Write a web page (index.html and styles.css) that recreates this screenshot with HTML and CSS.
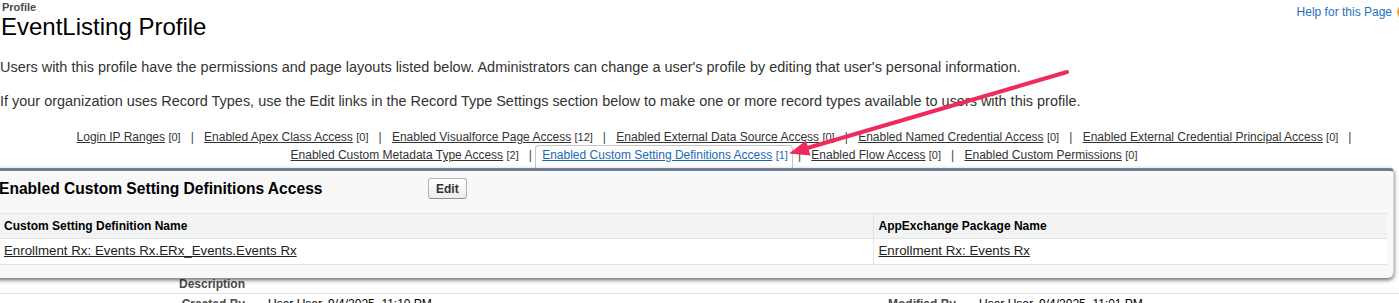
FILE: index.html
```html
<!DOCTYPE html>
<html lang="en">

<head>
  <meta charset="UTF-8">
  <meta name="viewport" content="width=device-width, initial-scale=1.0">
  <title>EventListing Profile</title>
  <link rel="stylesheet" href="styles.css">
</head>

<body>
<div class="page">
  <div class="header">
    <div class="titles">
      <div class="crumb">Profile</div>
      <h1>EventListing Profile</h1>
    </div>
    <div class="help">
      <a href="#">Help for this Page</a>
      <span class="help-icon"></span>
    </div>
  </div>

  <p class="intro">Users with this profile have the permissions and page layouts listed below. Administrators can change a user's profile by editing that user's personal information.</p>
  <p class="intro second">If your organization uses Record Types, use the Edit links in the Record Type Settings section below to make one or more record types available to users with this profile.</p>

  <div class="lists">
    <div class="list-row">
      <a href="#">Login IP Ranges</a> <span class="count">[0]</span><span class="sep">|</span>
      <a href="#">Enabled Apex Class Access</a> <span class="count">[0]</span><span class="sep">|</span>
      <a href="#">Enabled Visualforce Page Access</a> <span class="count">[12]</span><span class="sep">|</span>
      <a href="#">Enabled External Data Source Access</a> <span class="count">[0]</span><span class="sep">|</span>
      <a href="#">Enabled Named Credential Access</a> <span class="count">[0]</span><span class="sep">|</span>
      <a href="#">Enabled External Credential Principal Access</a> <span class="count">[0]</span><span class="sep last">|</span>
    </div>
    <div class="list-row">
      <a href="#">Enabled Custom Metadata Type Access</a> <span class="count">[2]</span><span class="sep">|</span>
      <span class="tab"><a href="#">Enabled Custom Setting Definitions Access</a> <span class="count">[1]</span></span><span class="sep">|</span>
      <a href="#">Enabled Flow Access</a> <span class="count">[0]</span><span class="sep">|</span>
      <a href="#">Enabled Custom Permissions</a> <span class="count">[0]</span>
    </div>

    <div class="hover-panel">
      <div class="panel-header">
        <h3>Enabled Custom Setting Definitions Access</h3>
        <button class="btn">Edit</button>
      </div>
      <table class="list">
        <colgroup>
          <col class="first-col">
          <col>
        </colgroup>
        <tr class="head">
          <th>Custom Setting Definition Name</th>
          <th>AppExchange Package Name</th>
        </tr>
        <tr>
          <td><a href="#">Enrollment Rx: Events Rx.ERx_Events.Events Rx</a></td>
          <td><a href="#">Enrollment Rx: Events Rx</a></td>
        </tr>
      </table>
    </div>
  </div>

  <div class="detail">
    <div class="detail-row">
      <span class="label">Description</span>
      <span class="value"></span>
      <span class="label"></span>
      <span class="value"></span>
    </div>
    <div class="detail-row">
      <span class="label">Created By</span>
      <span class="value">User User, 9/4/2025, 11:10 PM</span>
      <span class="label">Modified By</span>
      <span class="value">User User, 9/4/2025, 11:01 PM</span>
    </div>
  </div>
</div>

<svg class="arrow" width="1399" height="303" viewBox="0 0 1399 303">
  <line x1="1067" y1="72" x2="804" y2="149" stroke="#ef2a5c" stroke-width="4" stroke-linecap="round"/>
  <polygon points="789,153.5 806,140.5 810.5,155.5" fill="#ef2a5c"/>
</svg>
</body>
</html>
```

FILE: styles.css
```css
html {
  overflow: hidden;
}
html,
body {
  margin: 0;
  background-color: #fff;
  font-family: 'Liberation Sans', Arial, sans-serif;
  color: #333;
}
.page {
  position: relative;
}
.header {
  display: flex;
  justify-content: space-between;
}
.titles {
  padding-left: 1px;
}
.crumb {
  padding-top: 1px;
  padding-left: 1px;
  font-size: 11px;
  line-height: 13px;
  font-weight: 700;
  color: #4a4a4a;
}
h1 {
  margin: 0;
  font-size: 24px;
  line-height: 26px;
  font-weight: 400;
  color: #000;
}
.help {
  display: flex;
  align-items: center;
  height: 14px;
  margin-top: 5px;
  margin-right: -12px;
}
.help a {
  font-size: 12px;
  color: #1f6fbf;
  text-decoration: none;
}
.help-icon {
  width: 14px;
  height: 14px;
  margin-left: 5px;
  border-radius: 50%;
  background-color: #f0a43a;
}
.intro {
  margin: 18px 0 0;
  font-size: 14.45px;
  line-height: 18px;
  color: #333;
}
.intro.second {
  margin-top: 16px;
}
.lists {
  position: relative;
  margin-top: 18px;
  padding-left: 29px;
  text-align: center;
  font-size: 12px;
  line-height: 18px;
}
.list-row a {
  color: #333;
}
.count {
  font-size: 11px;
  color: #333;
}
.sep {
  margin: 0 7px 0 10px;
  color: #444;
}
.sep.last {
  margin-right: 0;
}
.tab {
  margin: 0 -5px 0 -7px;
  padding: 2px 4px 7px 6px;
  border: 1px solid #c6c6c6;
  border-bottom: none;
  border-radius: 4px 4px 0 0;
  background-color: #fff;
}
.tab a,
.tab .count {
  color: #1b69b3;
}
.hover-panel {
  position: absolute;
  top: 40px;
  left: -12px;
  width: 1404px;
  padding-bottom: 13px;
  border-top: 3px solid #6f7d95;
  border-right: 1px solid #d4d8dc;
  border-left: 1px solid #d4d8dc;
  border-radius: 0 4px 6px 0;
  background-color: #f8f8f8;
  box-shadow: 0 2px 4px rgba(0, 0, 0, 0.6);
  text-align: left;
}
.panel-header {
  display: flex;
  padding: 7px 0 14px 10px;
}
.panel-header h3 {
  width: 429px;
  margin: 0;
  font-size: 15.6px;
  line-height: 21px;
  font-weight: 700;
  color: #000;
}
.btn {
  height: 21px;
  padding: 0 7px;
  border: 1px solid #b5b5b5;
  border-bottom-color: #8f8f8f;
  border-radius: 3px;
  background: linear-gradient(#fefefe, #ececec);
  font-family: inherit;
  font-size: 12px;
  font-weight: 700;
  color: #333;
}
.list {
  width: 1388px;
  margin-left: 10px;
  border-collapse: collapse;
  table-layout: fixed;
  background-color: #fff;
}
.first-col {
  width: 874px;
}
.list th,
.list td {
  padding: 4px 2px 4px 5px;
  border: 1px solid #e0e3e5;
  border-right: none;
  border-left: none;
  text-align: left;
  line-height: 16px;
}
.list th + th,
.list td + td {
  border-left: 1px solid #e0e3e5;
}
.list th {
  background-color: #f2f3f3;
  font-size: 12px;
  font-weight: 700;
  color: #000;
}
.list td {
  padding-bottom: 5px;
  font-size: 13.3px;
}
.list td a {
  color: #222;
}
.detail {
  margin-top: 110px;
}
.detail-row {
  display: grid;
  grid-template-columns: 245px 515px 150px 1fr;
  column-gap: 23px;
  padding: 2px 0 1px;
  border-bottom: 1px solid #e3e3e3;
  font-size: 12px;
  line-height: 16px;
}
.label {
  text-align: right;
  font-weight: 700;
  color: #4a4a4a;
}
.value {
  color: #000;
}
.arrow {
  position: absolute;
  top: 0;
  left: 0;
  pointer-events: none;
}
```
